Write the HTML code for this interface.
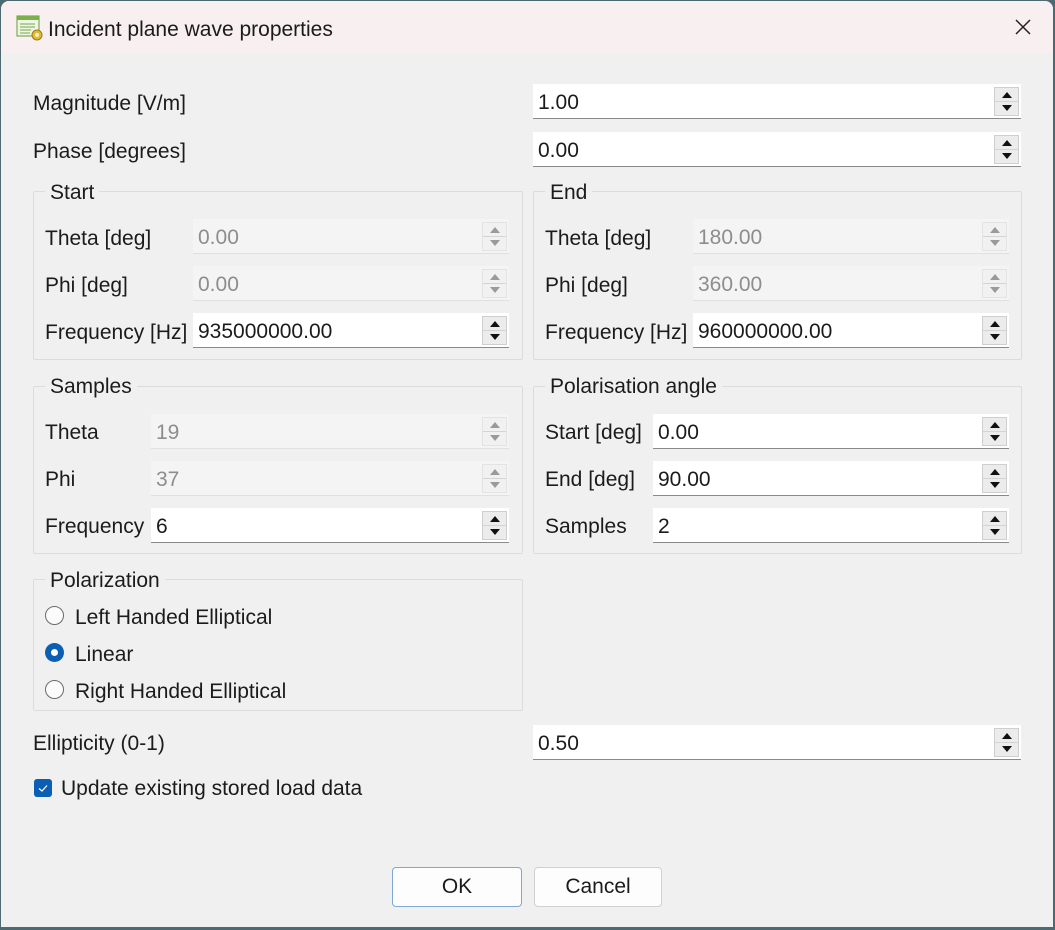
<!DOCTYPE html>
<html><head><meta charset="utf-8"><style>
*{box-sizing:border-box;margin:0;padding:0}
body{width:1055px;height:930px;overflow:hidden;background:#4d6a73;font-family:"Segoe UI","Liberation Sans",sans-serif;font-size:21px;color:#1b1b1b;position:relative}
#win{position:absolute;left:1px;top:1px;width:1052px;height:926px;background:#f0f0f0;border-radius:8px 8px 0 0;overflow:hidden}
#tb{position:absolute;left:0;top:0;width:100%;height:52px;background:#f7eff0}
.a{position:absolute;white-space:nowrap}
.lbl{position:absolute;white-space:nowrap;line-height:24px}
.f{position:absolute;height:35px;background:#fff;border-bottom:1px solid #8a8a8a}
.f span{position:absolute;left:5px;top:7px;line-height:24px}
.f.d{background:#f4f4f4;border-bottom:1px solid #e0e0e0;color:#8d8d8d}
.sp{position:absolute;right:2px;top:3px;width:25px;height:29px;border:1px solid #cfcfcf;background:#ececec}
.sp i{position:absolute;left:7px;width:0;height:0;border-left:5px solid transparent;border-right:5px solid transparent}
.sp i.u{top:4px;border-bottom:6px solid #111}
.sp i.dn{top:17px;border-top:6px solid #111}
.sp:after{content:"";position:absolute;left:0;right:0;top:13px;border-top:1px solid #d4d4d4}
.f.d .sp i.u{border-bottom-color:#9a9a9a}.f.d .sp i.dn{border-top-color:#9a9a9a}
.f.d .sp{border-color:#e3e3e3;background:#f1f1f1}
.g{position:absolute;border:1px solid #dcdcdc;border-radius:2px}
.gt{position:absolute;background:#f0f0f0;padding:0 5px;line-height:24px}
.r{position:absolute;width:19px;height:19px;border-radius:50%;border:1px solid #6b6b6b;background:#fbfbfb}
.r.on{border:none;background:#0a5fb4}
.r.on:after{content:"";position:absolute;left:6px;top:6px;width:7px;height:7px;border-radius:50%;background:#fff}
.btn{position:absolute;height:40px;border:1px solid #d0d0d0;border-radius:4px;background:#fdfdfd;text-align:center;line-height:38px}
</style></head><body>
<div id="win">
<div id="tb"></div>
<svg class="a" style="left:15px;top:14px" width="28" height="26" viewBox="0 0 28 26"><rect x="1" y="1" width="22" height="20" fill="#eef6e6" stroke="#6b9a3a"/><rect x="1" y="1" width="22" height="4" fill="#7bb04a"/><g stroke="#7aa54a"><line x1="4" y1="9" x2="19" y2="9"/><line x1="4" y1="12" x2="19" y2="12"/><line x1="4" y1="15" x2="15" y2="15"/><line x1="4" y1="18" x2="14" y2="18"/></g><circle cx="21" cy="20" r="5" fill="#e0b83a" stroke="#a07a10"/><circle cx="21" cy="20" r="2" fill="#fff3c0"/></svg>
<div class="lbl" style="left:47px;top:17px">Incident plane wave properties</div>
<svg class="a" style="left:1013px;top:17px" width="18" height="18"><path d="M2 2L16 16M16 2L2 16" stroke="#222" stroke-width="1.5"/></svg>

<div class="lbl" style="left:32px;top:91px">Magnitude [V/m]</div>
<div class="f" style="left:532px;top:83px;width:488px"><span>1.00</span><div class="sp"><i class="u"></i><i class="dn"></i></div></div>
<div class="lbl" style="left:32px;top:139px">Phase [degrees]</div>
<div class="f" style="left:532px;top:131px;width:488px"><span>0.00</span><div class="sp"><i class="u"></i><i class="dn"></i></div></div>

<div class="g" style="left:32px;top:190px;width:490px;height:169px"></div>
<div class="gt" style="left:44px;top:180px">Start</div>
<div class="lbl" style="left:44px;top:226px">Theta [deg]</div>
<div class="f d" style="left:192px;top:218px;width:316px"><span>0.00</span><div class="sp"><i class="u"></i><i class="dn"></i></div></div>
<div class="lbl" style="left:44px;top:273px">Phi [deg]</div>
<div class="f d" style="left:192px;top:265px;width:316px"><span>0.00</span><div class="sp"><i class="u"></i><i class="dn"></i></div></div>
<div class="lbl" style="left:44px;top:320px">Frequency [Hz]</div>
<div class="f" style="left:192px;top:312px;width:316px"><span>935000000.00</span><div class="sp"><i class="u"></i><i class="dn"></i></div></div>

<div class="g" style="left:532px;top:190px;width:489px;height:169px"></div>
<div class="gt" style="left:544px;top:180px">End</div>
<div class="lbl" style="left:544px;top:226px">Theta [deg]</div>
<div class="f d" style="left:692px;top:218px;width:316px"><span>180.00</span><div class="sp"><i class="u"></i><i class="dn"></i></div></div>
<div class="lbl" style="left:544px;top:273px">Phi [deg]</div>
<div class="f d" style="left:692px;top:265px;width:316px"><span>360.00</span><div class="sp"><i class="u"></i><i class="dn"></i></div></div>
<div class="lbl" style="left:544px;top:320px">Frequency [Hz]</div>
<div class="f" style="left:692px;top:312px;width:316px"><span>960000000.00</span><div class="sp"><i class="u"></i><i class="dn"></i></div></div>

<div class="g" style="left:32px;top:385px;width:490px;height:168px"></div>
<div class="gt" style="left:44px;top:374px">Samples</div>
<div class="lbl" style="left:44px;top:420px">Theta</div>
<div class="f d" style="left:150px;top:413px;width:358px"><span>19</span><div class="sp"><i class="u"></i><i class="dn"></i></div></div>
<div class="lbl" style="left:44px;top:467px">Phi</div>
<div class="f d" style="left:150px;top:460px;width:358px"><span>37</span><div class="sp"><i class="u"></i><i class="dn"></i></div></div>
<div class="lbl" style="left:44px;top:514px">Frequency</div>
<div class="f" style="left:150px;top:507px;width:358px"><span>6</span><div class="sp"><i class="u"></i><i class="dn"></i></div></div>

<div class="g" style="left:532px;top:385px;width:489px;height:168px"></div>
<div class="gt" style="left:544px;top:374px">Polarisation angle</div>
<div class="lbl" style="left:544px;top:420px">Start [deg]</div>
<div class="f" style="left:652px;top:413px;width:356px"><span>0.00</span><div class="sp"><i class="u"></i><i class="dn"></i></div></div>
<div class="lbl" style="left:544px;top:467px">End [deg]</div>
<div class="f" style="left:652px;top:460px;width:356px"><span>90.00</span><div class="sp"><i class="u"></i><i class="dn"></i></div></div>
<div class="lbl" style="left:544px;top:514px">Samples</div>
<div class="f" style="left:652px;top:507px;width:356px"><span>2</span><div class="sp"><i class="u"></i><i class="dn"></i></div></div>

<div class="g" style="left:32px;top:578px;width:490px;height:132px"></div>
<div class="gt" style="left:44px;top:568px">Polarization</div>
<div class="r" style="left:44px;top:605px"></div><div class="lbl" style="left:74px;top:605px">Left Handed Elliptical</div>
<div class="r on" style="left:44px;top:642px"></div><div class="lbl" style="left:74px;top:642px">Linear</div>
<div class="r" style="left:44px;top:679px"></div><div class="lbl" style="left:74px;top:679px">Right Handed Elliptical</div>

<div class="lbl" style="left:32px;top:731px">Ellipticity (0-1)</div>
<div class="f" style="left:532px;top:724px;width:488px"><span>0.50</span><div class="sp"><i class="u"></i><i class="dn"></i></div></div>

<div class="a" style="left:33px;top:778px;width:18px;height:18px;border-radius:3px;background:#0a5fb4"><svg width="18" height="18"><path d="M5 9.5L8 12L13 6.5" stroke="#fff" stroke-width="1.2" fill="none"/></svg></div>
<div class="lbl" style="left:60px;top:776px">Update existing stored load data</div>

<div class="btn" style="left:391px;top:866px;width:130px;border-color:#7fa8d6">OK</div>
<div class="btn" style="left:533px;top:866px;width:128px">Cancel</div>
</div>
</body></html>
